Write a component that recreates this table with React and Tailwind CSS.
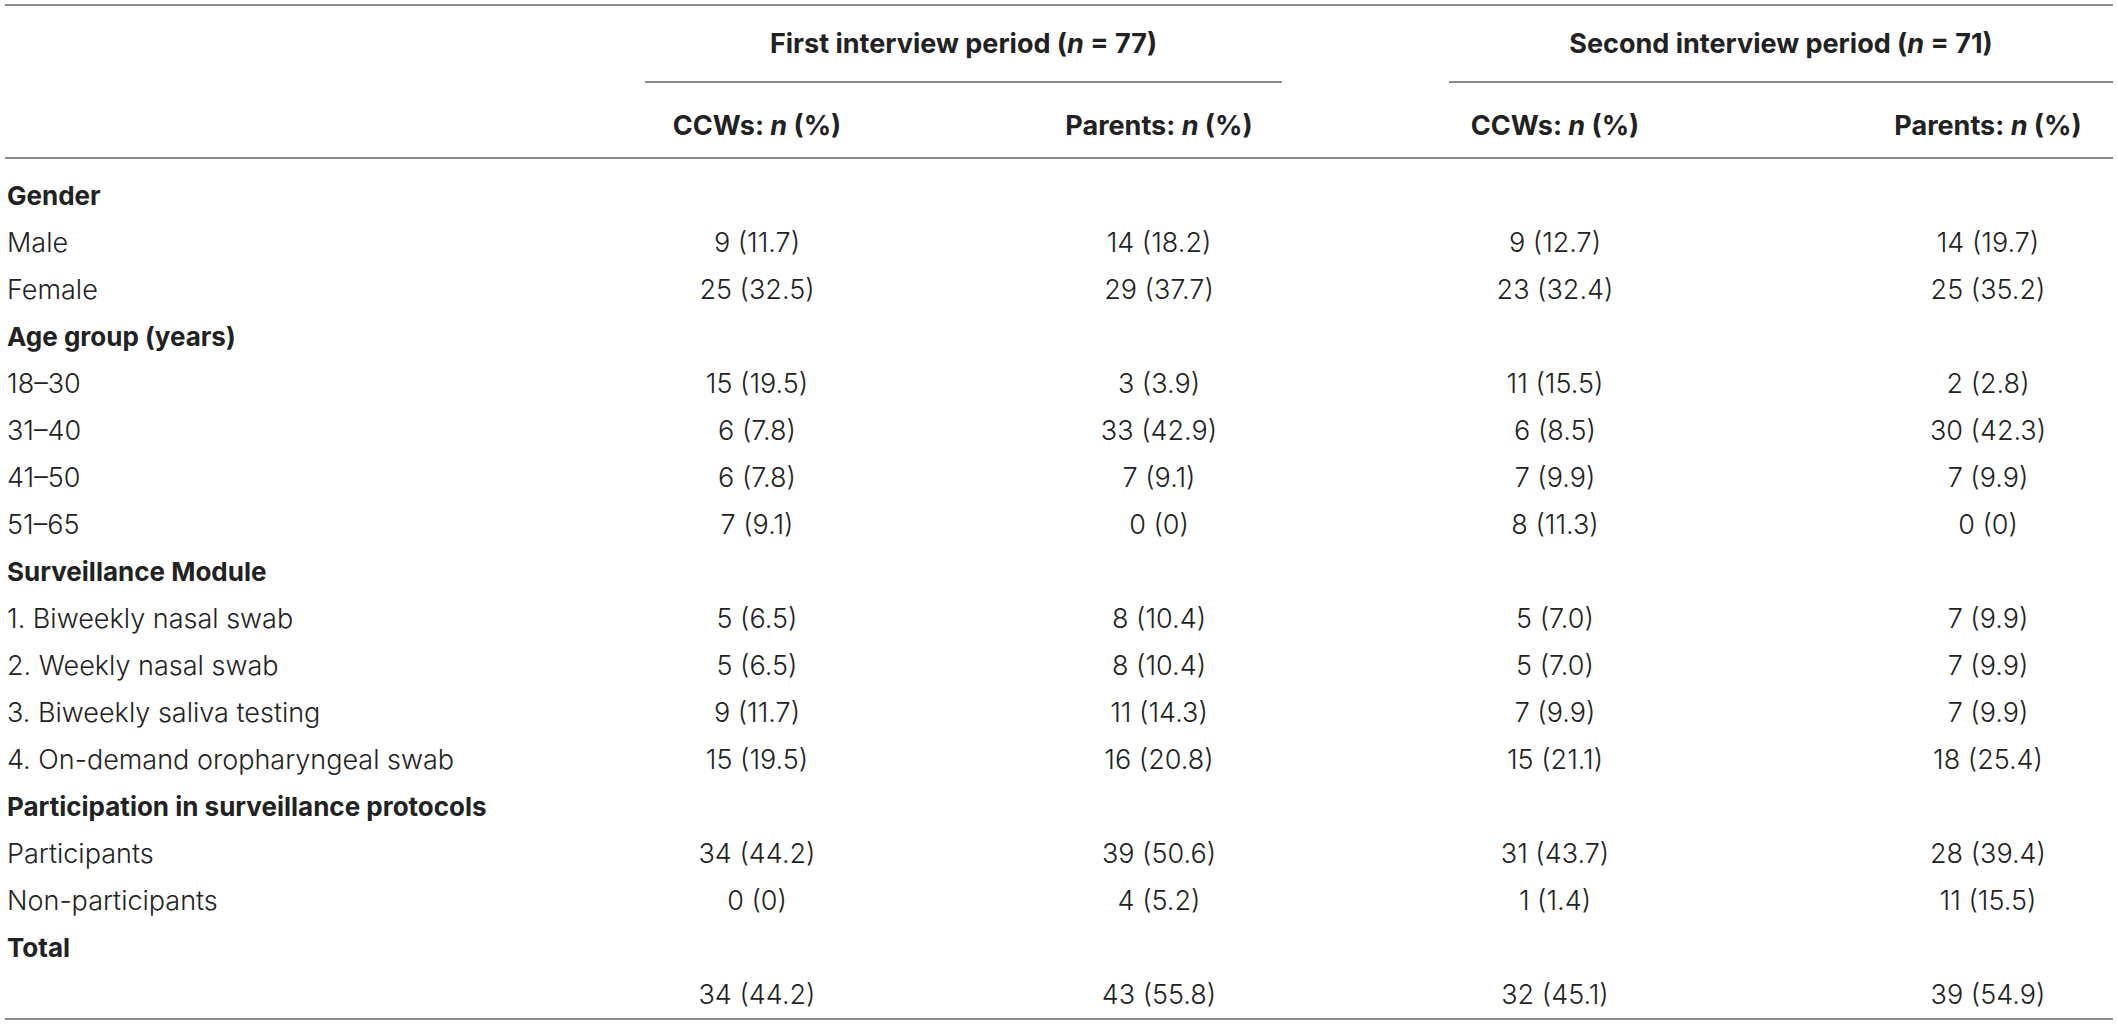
// Tabla: participantes por periodo de entrevista (CCWs / padres)

import React from "react";

const COLS = "grid grid-cols-[640px_637px_167px_664px]";

const SECTIONS = [
  {
    title: "Gender",
    rows: [
      ["Male", "9 (11.7)", "14 (18.2)", "9 (12.7)", "14 (19.7)"],
      ["Female", "25 (32.5)", "29 (37.7)", "23 (32.4)", "25 (35.2)"],
    ],
  },
  {
    title: "Age group (years)",
    rows: [
      ["18–30", "15 (19.5)", "3 (3.9)", "11 (15.5)", "2 (2.8)"],
      ["31–40", "6 (7.8)", "33 (42.9)", "6 (8.5)", "30 (42.3)"],
      ["41–50", "6 (7.8)", "7 (9.1)", "7 (9.9)", "7 (9.9)"],
      ["51–65", "7 (9.1)", "0 (0)", "8 (11.3)", "0 (0)"],
    ],
  },
  {
    title: "Surveillance Module",
    rows: [
      ["1. Biweekly nasal swab", "5 (6.5)", "8 (10.4)", "5 (7.0)", "7 (9.9)"],
      ["2. Weekly nasal swab", "5 (6.5)", "8 (10.4)", "5 (7.0)", "7 (9.9)"],
      ["3. Biweekly saliva testing", "9 (11.7)", "11 (14.3)", "7 (9.9)", "7 (9.9)"],
      ["4. On-demand oropharyngeal swab", "15 (19.5)", "16 (20.8)", "15 (21.1)", "18 (25.4)"],
    ],
  },
  {
    title: "Participation in surveillance protocols",
    rows: [
      ["Participants", "34 (44.2)", "39 (50.6)", "31 (43.7)", "28 (39.4)"],
      ["Non-participants", "0 (0)", "4 (5.2)", "1 (1.4)", "11 (15.5)"],
    ],
  },
  {
    title: "Total",
    rows: [["", "34 (44.2)", "43 (55.8)", "32 (45.1)", "39 (54.9)"]],
  },
];

// Fila con las cuatro columnas de valores
const Row = ({ cells, bold }) => (
  <div className={`${COLS} h-[47px] items-center`}>
    <div className={bold ? "pl-[2px] text-[26px] font-bold" : "pl-[2px]"}>{cells[0]}</div>
    <div className="flex justify-between">
      <span className="w-[224px] text-center">{cells[1]}</span>
      <span className="w-[246px] text-center">{cells[2]}</span>
    </div>
    <div />
    <div className="flex justify-between">
      <span className="w-[212px] text-center">{cells[3]}</span>
      <span className="w-[250px] text-center">{cells[4]}</span>
    </div>
  </div>
);

const Rule = () => <div className="h-[2px] bg-[#8c8c8c]" />;

const ColHead = ({ who }) => (
  <>
    {who}: <i>n</i> (%)
  </>
);

export default function App() {
  return (
    <div className="min-h-screen bg-white px-[5px] pt-[4px] text-[27px] font-light leading-none text-[#222] font-['Inter','Liberation_Sans',sans-serif]">
      <Rule />

      {/* ── Cabecera ─────────────────────────────────────────── */}
      <div className={`${COLS} h-[75px] items-center font-bold`}>
        <div />
        <div className="text-center">
          First interview period (<i>n</i> = 77)
        </div>
        <div />
        <div className="text-center">
          Second interview period (<i>n</i> = 71)
        </div>
      </div>
      <div className={COLS}>
        <div />
        <Rule />
        <div />
        <Rule />
      </div>
      <div className={`${COLS} h-[74px] items-center pt-[10px] font-bold`}>
        <div />
        <div className="flex justify-between">
          <span className="w-[224px] text-center">
            <ColHead who="CCWs" />
          </span>
          <span className="w-[246px] text-center">
            <ColHead who="Parents" />
          </span>
        </div>
        <div />
        <div className="flex justify-between">
          <span className="w-[212px] text-center">
            <ColHead who="CCWs" />
          </span>
          <span className="w-[250px] text-center">
            <ColHead who="Parents" />
          </span>
        </div>
      </div>
      <Rule />

      {/* ── Cuerpo ───────────────────────────────────────────── */}
      <div className="pt-[13px]">
        {SECTIONS.map((s) => (
          <React.Fragment key={s.title}>
            <Row cells={[s.title, "", "", "", ""]} bold />
            {s.rows.map((r, i) => (
              <Row key={s.title + i} cells={r} />
            ))}
          </React.Fragment>
        ))}
      </div>
      <Rule />
    </div>
  );
}
